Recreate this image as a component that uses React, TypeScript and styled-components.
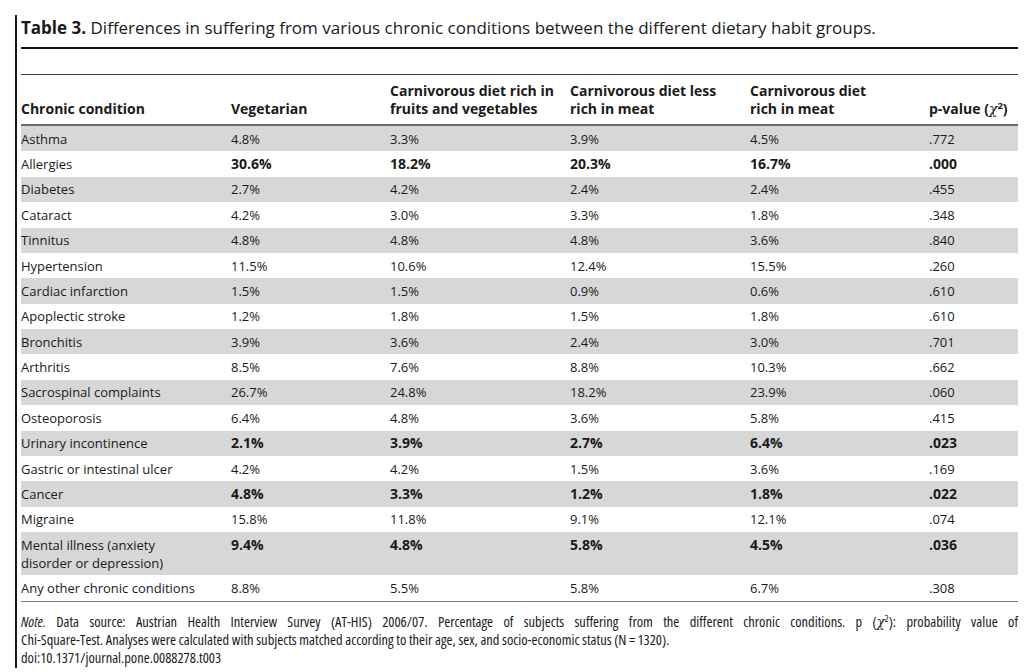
import React from "react";
import styled, { createGlobalStyle } from "styled-components";

const GlobalStyle = createGlobalStyle`
  html, body { margin: 0; padding: 0; background: #ffffff; }
  body {
    font-family: "Open Sans", "Noto Sans", sans-serif;
    color: #1a1a1a;
    overflow: hidden;
  }
`;

const Figure = styled.figure`
  margin: 15px 0 0 15px;
  width: 1003px;
  min-height: 653px;
  box-sizing: border-box;
  border-left: 2px solid #1a1a1a;
  padding-left: 4px;
`;

const Caption = styled.figcaption`
  font-size: 17px;
  line-height: 26px;
  margin: 0 0 6px;
  white-space: nowrap;
`;

const CaptionLabel = styled.b`
  font-weight: 700;
`;

const TableFrame = styled.div`
  border-top: 2px solid #111111;
  padding-top: 25px;
`;

const Table = styled.table`
  width: 997px;
  table-layout: fixed;
  border-collapse: separate;
  border-spacing: 0;
  border-top: 1px solid #3c3c3c;
  font-size: 13px;
  line-height: 18px;
`;

const Col = styled.col<{ $w: number }>`
  width: ${(p) => p.$w}px;
`;

const HeadCell = styled.th`
  text-align: left;
  vertical-align: bottom;
  font-size: 14px;
  font-weight: 700;
  padding: 7px 4px 6px 0;
  border-bottom: 2px solid #6c6c6c;
  white-space: nowrap;
`;

const Row = styled.tr<{ $shaded: boolean }>`
  background: ${(p) => (p.$shaded ? "#d7d7d7" : "#ffffff")};
`;

const Cell = styled.td<{ $bold?: boolean; $last?: boolean }>`
  vertical-align: top;
  padding: 3.7px 26px 3.7px 0;
  font-size: ${(p) => (p.$bold ? "14px" : "13px")};
  font-weight: ${(p) => (p.$bold ? 700 : 400)};
  border-bottom: ${(p) => (p.$last ? "1px solid #7c7c7c" : "0")};
`;

const Chi = styled.span`
  font-family: "DejaVu Serif", "Liberation Serif", serif;
  font-style: italic;
  font-weight: 400;
`;

const Sup = styled.sup`
  font-size: 9.5px;
  line-height: 0;
  vertical-align: 5px;
`;

const Note = styled.div`
  margin-top: 11px;
  font-size: 14.45px;
  line-height: 18px;
  font-stretch: 75%;
`;

const NoteLine = styled.div<{ $full?: boolean }>`
  white-space: nowrap;
  text-align: ${(p) => (p.$full ? "justify" : "left")};
  text-align-last: ${(p) => (p.$full ? "justify" : "left")};
`;

type DataRow = { label: string; values: string[]; bold?: boolean };

const rows: DataRow[] = [
  { label: "Asthma", values: ["4.8%", "3.3%", "3.9%", "4.5%", ".772"] },
  { label: "Allergies", values: ["30.6%", "18.2%", "20.3%", "16.7%", ".000"], bold: true },
  { label: "Diabetes", values: ["2.7%", "4.2%", "2.4%", "2.4%", ".455"] },
  { label: "Cataract", values: ["4.2%", "3.0%", "3.3%", "1.8%", ".348"] },
  { label: "Tinnitus", values: ["4.8%", "4.8%", "4.8%", "3.6%", ".840"] },
  { label: "Hypertension", values: ["11.5%", "10.6%", "12.4%", "15.5%", ".260"] },
  { label: "Cardiac infarction", values: ["1.5%", "1.5%", "0.9%", "0.6%", ".610"] },
  { label: "Apoplectic stroke", values: ["1.2%", "1.8%", "1.5%", "1.8%", ".610"] },
  { label: "Bronchitis", values: ["3.9%", "3.6%", "2.4%", "3.0%", ".701"] },
  { label: "Arthritis", values: ["8.5%", "7.6%", "8.8%", "10.3%", ".662"] },
  { label: "Sacrospinal complaints", values: ["26.7%", "24.8%", "18.2%", "23.9%", ".060"] },
  { label: "Osteoporosis", values: ["6.4%", "4.8%", "3.6%", "5.8%", ".415"] },
  { label: "Urinary incontinence", values: ["2.1%", "3.9%", "2.7%", "6.4%", ".023"], bold: true },
  { label: "Gastric or intestinal ulcer", values: ["4.2%", "4.2%", "1.5%", "3.6%", ".169"] },
  { label: "Cancer", values: ["4.8%", "3.3%", "1.2%", "1.8%", ".022"], bold: true },
  { label: "Migraine", values: ["15.8%", "11.8%", "9.1%", "12.1%", ".074"] },
  {
    label: "Mental illness (anxiety disorder or depression)",
    values: ["9.4%", "4.8%", "5.8%", "4.5%", ".036"],
    bold: true,
  },
  { label: "Any other chronic conditions", values: ["8.8%", "5.5%", "5.8%", "6.7%", ".308"] },
];

const widths = [210, 159, 180, 180, 179, 89];

export default function App() {
  return (
    <>
      <GlobalStyle />
      <Figure>
        <Caption>
          <CaptionLabel>Table 3.</CaptionLabel> Differences in suffering from various chronic
          conditions between the different dietary habit groups.
        </Caption>
        <TableFrame>
          <Table>
            <colgroup>
              {widths.map((w, i) => (
                <Col key={i} $w={w} />
              ))}
            </colgroup>
            <thead>
              <tr>
                <HeadCell>Chronic condition</HeadCell>
                <HeadCell>Vegetarian</HeadCell>
                <HeadCell>
                  Carnivorous diet rich in
                  <br />
                  fruits and vegetables
                </HeadCell>
                <HeadCell>
                  Carnivorous diet less
                  <br />
                  rich in meat
                </HeadCell>
                <HeadCell>
                  Carnivorous diet
                  <br />
                  rich in meat
                </HeadCell>
                <HeadCell>
                  p-value (<Chi>χ</Chi>
                  <Sup>2</Sup>)
                </HeadCell>
              </tr>
            </thead>
            <tbody>
              {rows.map((r, i) => (
                <Row key={r.label} $shaded={i % 2 === 0}>
                  <Cell $last={i === rows.length - 1}>{r.label}</Cell>
                  {r.values.map((v, j) => (
                    <Cell key={j} $bold={r.bold} $last={i === rows.length - 1}>
                      {v}
                    </Cell>
                  ))}
                </Row>
              ))}
            </tbody>
          </Table>
        </TableFrame>
        <Note>
          <NoteLine $full>
            <i>Note.</i> Data source: Austrian Health Interview Survey (AT-HIS) 2006/07. Percentage of
            subjects suffering from the different chronic conditions. p (<Chi>χ</Chi>
            <Sup>2</Sup>): probability value of
          </NoteLine>
          <NoteLine>
            Chi-Square-Test. Analyses were calculated with subjects matched according to their age,
            sex, and socio-economic status (N{"\u2009"}={"\u2009"}1320).
          </NoteLine>
          <NoteLine>doi:10.1371/journal.pone.0088278.t003</NoteLine>
        </Note>
      </Figure>
    </>
  );
}
